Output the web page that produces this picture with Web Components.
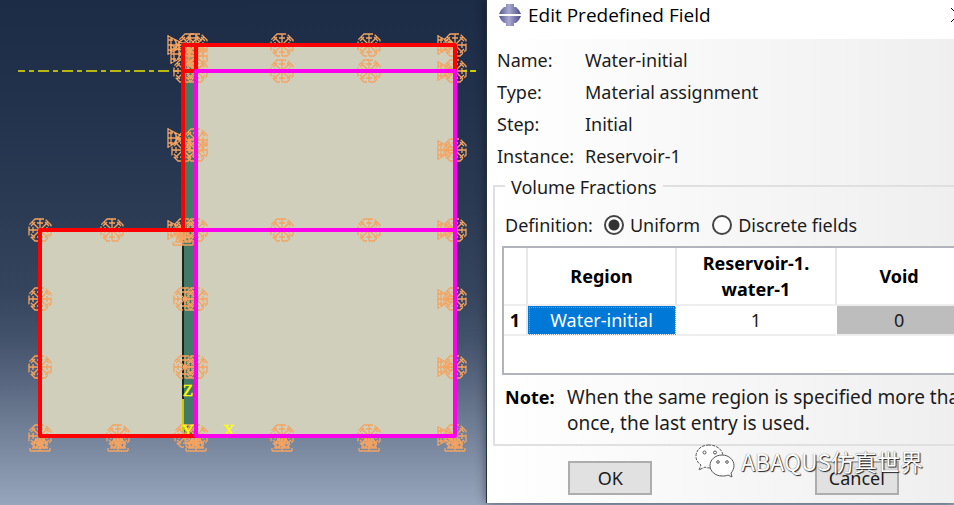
<!DOCTYPE html>
<html lang="en">
<head>
<meta charset="utf-8">
<title>Edit Predefined Field</title>
<style>
  html, body { margin: 0; height: 100%; overflow: hidden; }
</style>
</head>
<body>
<cae-workspace>
  <model-viewport slot="model"></model-viewport>
  <field-dialog slot="dialog" heading="Edit Predefined Field">
    <div slot="properties">
      <property-row label="Name:">Water-initial</property-row>
      <property-row label="Type:">Material assignment</property-row>
      <property-row label="Step:">Initial</property-row>
      <property-row label="Instance:">Reservoir-1</property-row>
    </div>
    <volume-fractions></volume-fractions>
    <push-button slot="actions">OK</push-button>
    <push-button slot="actions">Cancel</push-button>
  </field-dialog>
  <account-mark slot="mark">ABAQUS仿真世界</account-mark>
</cae-workspace>

<script>
const define = (name, html, setup) => {
  const template = document.createElement('template');
  template.innerHTML = html;
  customElements.define(name, class extends HTMLElement {
    connectedCallback() {
      if (this.shadowRoot) return;
      const root = this.attachShadow({ mode: 'open' });
      root.append(template.content.cloneNode(true));
      if (setup) setup(this, root);
    }
  });
};

define('cae-workspace', `
<style>
  :host {
    display: grid; grid-template-columns: 486fr 468fr; position: relative;
    min-height: 100vh; overflow: hidden;
    font: 18px/26px "Noto Sans", "Noto Sans CJK SC", sans-serif; color: #1c1c1c;
    background: linear-gradient(#1c2b46 0%, #22324c 20%, #2b3b54 42%, #36455e 58%, #43526b 67%, #5c6a83 77%, #76849c 87%, #98a6bd 100%);
  }
</style>
<slot name="model"></slot><slot name="dialog"></slot><slot name="mark"></slot>`);

define('model-viewport', `
<style>
  :host { display: block; min-width: 0; }
  svg { display: block; width: 100%; height: auto; }
  .sym { fill: none; stroke: #f4a460; stroke-width: 1.3; }
  .red, .mag { fill: none; stroke: #f00; stroke-width: 4; }
  .mag { stroke: #f0e; }
  text { font: 17px "Liberation Serif", serif; fill: #ff0; stroke: #ff0; stroke-width: .4; text-anchor: middle; }
</style>
<svg viewBox="0 0 486 505" role="img" aria-label="Reservoir assembly">
  <defs>
    <g id="wheel">
      <path d="M-5-11H5L11-5V5L5 11H-5L-11 5V-5Z" stroke-dasharray="9 2"/>
      <path d="M-3-7L3-7M7-3V3M3 7H-3M-7 3V-3"/>
      <path d="M-11 0H11M0-11V11M-8-8L8 8M8-8L-8 8M-9-4L-5-8M5-8L9-4M-9 4L-5 8M5 8L9 4"/>
    </g>
    <g id="foot">
      <path d="M-10 15H10M-8 12H8M-10 15V12M10 15V12M-4 2L-7 12M4 2L7 12M-4 3L4 12M4 3L-4 12M0 2V15M-6 7H6"/>
      <path d="M-3 4H3V9H-3Z"/>
    </g>
    <g id="side">
      <path d="M-17-10V10M-14-8V8M-17-9L-3-2M-17 9L-3 2M-17 0H-2M-17-5H-12M-17 5H-12M-11-6L-4 5M-11 6L-4-5M-9-5V5M-6-4V4"/>
    </g>
  </defs>
  <path d="M18 71H476" fill="none" stroke="#b8b80c" stroke-width="2" stroke-dasharray="11 4 5 4" stroke-dashoffset="4"/>
  <path d="M40 230H183V45H455V436H40Z" fill="#d0cfbb"/>
  <path d="M183 45H196V436H183Z" fill="#427a66"/>
  <path d="M183 240V399" stroke="#1d2320" stroke-width="2"/>
  <path d="M183 399V436" stroke="#d0c800" stroke-width="2"/>
  <g class="sym" id="symbols"></g>
  <path d="M186 48H193V66H186Z" fill="#f4a460" opacity=".6"/>
  <path d="M463 71H467M471 71H476" stroke="#d0d000" stroke-width="2"/>
  <text x="188" y="396">Z</text>
  <text x="188" y="436">Y</text>
  <text x="229" y="436">X</text>
  <path class="red" d="M196 436H40V230H196M183 230V45H455V71M196 45V71M183 71H196" stroke-linejoin="round"/>
  <path class="mag" d="M196 71H455V436H196ZM196 230H455" stroke-linejoin="round"/>
</svg>`, (host, root) => {
  const wheels = [
    [282,45],[369,45],[455,45],[190,45],[196,45],[185,71],[196,56],[196,71],[282,71],[369,71],[455,71],
    [196,140],[196,150],[183,150],[455,150],
    [40,230],[112,230],[185,230],[196,230],[282,230],[369,230],[455,230],
    [40,299],[185,299],[196,299],[455,299],
    [40,367],[185,367],[196,367],[455,367],
    [40,436],[118,436],[186,436],[196,436],[282,436],[369,436],[455,436]];
  const feet = [[40,436],[118,436],[196,436],[282,436],[369,436],[455,436],[183,230]];
  const sides = [[185,45],[188,54],[185,138],[185,230],[455,45],[455,71],[455,150],[455,230],[455,299],[455,367],[455,436]];
  const draw = (id, list) => list.map(([x, y]) => `<use href="#${id}" x="${x}" y="${y}"/>`).join('');
  root.getElementById('symbols').innerHTML =
    draw('wheel', wheels) + draw('foot', feet) + draw('side', sides);
});

define('field-dialog', `
<style>
  :host {
    display: flex; flex-direction: column; min-width: 0; box-sizing: border-box; margin-bottom: 2px;
    border-left: 1px solid #26303f; overflow: hidden; background: #fff; box-shadow: 0 0 10px #0007;
  }
  header { display: flex; align-items: center; gap: 7px; height: 30px; padding: 0 0 9px 12px; color: #000; background: #fff; }
  h1 { flex: 1; margin: 0; font: 19px/26px "Open Sans", sans-serif; white-space: nowrap; }
  header button { border: 0; padding: 0; margin-right: -12px; background: none; display: flex; }
  main {
    flex: 1; display: flex; flex-direction: column; box-sizing: border-box; width: 105.6%;
    padding: 5px 6px 8px; background: linear-gradient(90deg, #fff, #eee);
  }
  .props { padding-left: 4px; }
  footer { display: flex; justify-content: space-around; margin: 15px -6px 0; }
</style>
<header>
  <svg width="22" height="22" viewBox="0 0 22 22" aria-hidden="true">
    <defs><linearGradient id="g"><stop stop-color="#55558f"/><stop offset=".45" stop-color="#a9a9d2"/><stop offset="1" stop-color="#4b4b86"/></linearGradient></defs>
    <path fill="url(#g)" d="M7 0H15V3H17L20 6L22 10H0L2 6L5 3H7ZM0 12H22L20 16L17 19H15V22H7V19H5L2 16Z"/>
  </svg>
  <h1></h1>
  <button type="button" aria-label="Close"><svg width="16" height="16" viewBox="0 0 16 16"><path d="M1 1L15 15M15 1L1 15" stroke="#000" fill="none"/></svg></button>
</header>
<main>
  <div class="props"><slot name="properties"></slot></div>
  <slot></slot>
  <footer><slot name="actions"></slot></footer>
</main>`, (host, root) => {
  root.querySelector('h1').textContent = host.getAttribute('heading');
});

define('property-row', `
<style>
  :host { display: grid; grid-template-columns: 88px 1fr; line-height: 32px; height: 32px; white-space: nowrap; }
</style>
<span class="label"></span><span><slot></slot></span>`, (host, root) => {
  root.querySelector('.label').textContent = host.getAttribute('label');
});

define('volume-fractions', `
<style>
  :host { display: block; }
  fieldset { margin: 0; padding: 0 7px 8px; border: 2px solid #e0e0e0; min-width: 0; }
  legend { margin-left: 3px; padding: 3px 6px 0; line-height: 24px; }
  .definition { display: flex; align-items: center; height: 32px; padding: 10px 0 5px 3px; }
  .definition > span { margin-right: 11px; }
  label { display: flex; align-items: center; gap: 6px; margin-right: 12px; white-space: nowrap; }
  input {
    appearance: none; width: 20px; height: 20px; margin: 0; border: 2px solid #444; border-radius: 50%; background: #fff;
  }
  input:checked { background: radial-gradient(circle, #333 5px, #fff 6px); }
  .sheet { height: 125px; border: 2px solid #b2b4bb; background: #fff; }
  table { width: 100%; border-collapse: separate; border-spacing: 0; table-layout: fixed; }
  th, td { padding: 0; text-align: center; border-right: 2px solid #e8e8e8; border-bottom: 2px solid #eee; color: #1c1c1c; }
  thead th { height: 56px; color: #000; }
  tbody th, tbody td { height: 28px; line-height: 28px; border-right-color: #fff; }
  tbody th { color: #000; border-right-color: #e8e8e8; }
  tbody .picked { background: #0078d7; color: #fff; outline: 1px dotted #e08030; outline-offset: -2px; }
  tbody .void { background: #bdbdbd; border-right-color: #bdbdbd; }
  .note { display: grid; grid-template-columns: 62px 1fr; margin: 9px 0 0 3px; white-space: nowrap; }
  .note p { margin: 0; font-size: 19px; }
  strong { color: #000; }
</style>
<fieldset>
  <legend>Volume Fractions</legend>
  <div class="definition" role="radiogroup" aria-labelledby="def">
    <span id="def">Definition:</span>
    <label><input type="radio" name="definition" checked>Uniform</label>
    <label><input type="radio" name="definition">Discrete fields</label>
  </div>
  <div class="sheet">
    <table>
      <colgroup><col style="width:24px"><col style="width:149px"><col style="width:160px"><col></colgroup>
      <thead><tr><th></th><th scope="col">Region</th><th scope="col">Reservoir-1.<br>water-1</th><th scope="col">Void</th></tr></thead>
      <tbody><tr><th scope="row">1</th><td class="picked">Water-initial</td><td>1</td><td class="void">0</td></tr></tbody>
    </table>
  </div>
  <div class="note"><strong>Note:</strong><p>When the same region is specified more than<br>once, the last entry is used.</p></div>
</fieldset>`);

define('push-button', `
<style>
  :host { display: block; }
  button { box-sizing: border-box; min-width: 84px; height: 34px; padding: 0 8px; border: 2px solid #adadad; background: #e1e1e1; color: inherit; font: inherit; }
</style>
<button type="button"><slot></slot></button>`);

define('account-mark', `
<style>
  :host {
    position: absolute; right: 31px; bottom: 27px; display: flex; align-items: center; gap: 6px;
    font: 23px/34px "Noto Sans CJK SC", sans-serif; color: #fff; white-space: nowrap;
    text-shadow: 1px 1px 1px #222, 0 0 1px #555;
  }
</style>
<svg width="40" height="34" viewBox="0 0 40 34" fill="#fff" stroke="#555" stroke-width="1" aria-hidden="true">
  <path stroke-dasharray="3 1" d="M14 1C6 1 1 6 1 12.500C1 16 3 19 6 21L4 26L10 23C12 24 14 24 16 24C23 24 28 19 28 12.500C28 6 22 1 14 1Z"/>
  <path d="M27 11C20 11 15 16 15 21.500C15 27 20 32 27 32C29 32 31 32 33 31L37 33L36 29C38 27 39 24 39 21.500C39 16 34 11 27 11Z"/>
  <g fill="none"><circle cx="9.500" cy="8.500" r="1.500"/><circle cx="20" cy="8.500" r="1.500"/><circle cx="23" cy="18" r="1.300"/><circle cx="32" cy="18" r="1.300"/></g>
</svg>
<span><slot></slot></span>`);
</script>
</body>
</html>
